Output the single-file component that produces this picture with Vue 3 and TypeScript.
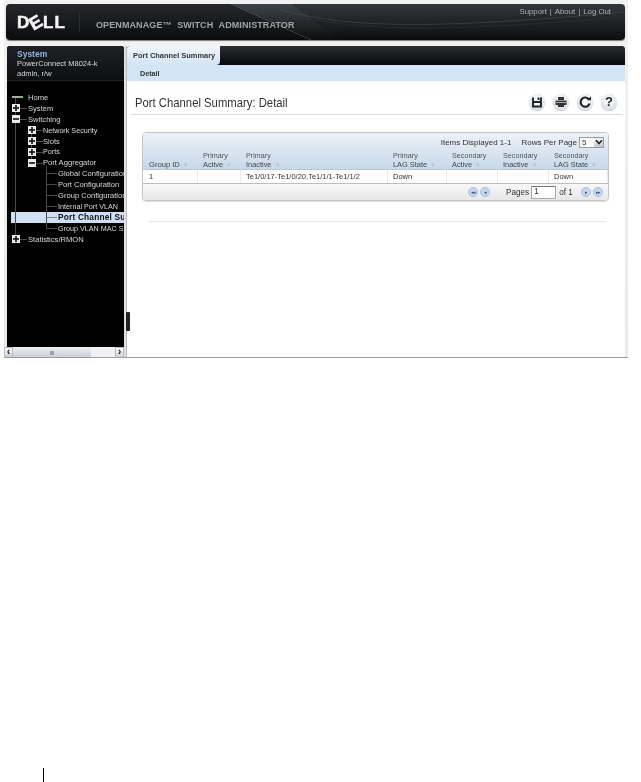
<script setup lang="ts">
interface TreeRow { label: string; depth: number; icon: 'plus' | 'minus' | 'leaf' | 'home'; size?: string; active?: boolean }
const tree: TreeRow[] = [
  { label: 'Home', depth: 0, icon: 'home' },
  { label: 'System', depth: 0, icon: 'plus' },
  { label: 'Switching', depth: 0, icon: 'minus' },
  { label: 'Network Security', depth: 1, icon: 'plus', size: 'sm' },
  { label: 'Slots', depth: 1, icon: 'plus' },
  { label: 'Ports', depth: 1, icon: 'plus', size: 'sm' },
  { label: 'Port Aggregator', depth: 1, icon: 'minus' },
  { label: 'Global Configuration', depth: 2, icon: 'leaf' },
  { label: 'Port Configuration', depth: 2, icon: 'leaf' },
  { label: 'Group Configuration', depth: 2, icon: 'leaf' },
  { label: 'Internal Port VLAN', depth: 2, icon: 'leaf', size: 'sm' },
  { label: 'Port Channel Summary', depth: 2, icon: 'leaf', active: true },
  { label: 'Group VLAN MAC Summary', depth: 2, icon: 'leaf', size: 'sm' },
  { label: 'Statistics/RMON', depth: 0, icon: 'plus' },
]
const columns = [
  { top: '', bottom: 'Group ID', w: 55 },
  { top: 'Primary', bottom: 'Active', w: 43 },
  { top: 'Primary', bottom: 'Inactive', w: 147 },
  { top: 'Primary', bottom: 'LAG State', w: 59 },
  { top: 'Secondary', bottom: 'Active', w: 51 },
  { top: 'Secondary', bottom: 'Inactive', w: 51 },
  { top: 'Secondary', bottom: 'LAG State', w: 59 },
]
const row = ['1', '', 'Te1/0/17-Te1/0/20,Te1/1/1-Te1/1/2', 'Down', '', '', 'Down']
</script>

<template>
  <div class="page">
    <div class="shot">
      <header class="masthead">
        <svg class="swoosh" viewBox="0 0 619 36" preserveAspectRatio="none" aria-hidden="true">
          <defs>
            <linearGradient id="mast" x1="0" y1="0" x2="0" y2="1">
              <stop offset="0" stop-color="#33363b" />
              <stop offset="0.6" stop-color="#1c1e21" />
              <stop offset="1" stop-color="#0b0c0d" />
            </linearGradient>
            <linearGradient id="band" x1="0" y1="0" x2="0" y2="1">
              <stop offset="0" stop-color="#25272b" />
              <stop offset="1" stop-color="#0b0c0e" />
            </linearGradient>
            <linearGradient id="wedge" x1="0" y1="0" x2="0" y2="1">
              <stop offset="0" stop-color="#3d434b" />
              <stop offset="1" stop-color="#1b1d20" stop-opacity="0" />
            </linearGradient>
          </defs>
          <path d="M0 0H225L305 36H0Z" fill="url(#band)" />
          <path d="M225 0H619V36H305Z" fill="url(#mast)" />
          <path d="M225 0H285L335 36H305Z" fill="url(#wedge)" />
          <path d="M272 5C340 24 420 26 619 8" fill="none" stroke="#4c5055" stroke-width="0.6" />
          <path d="M300 14C370 28 450 27 619 13" fill="none" stroke="#36393e" stroke-width="0.5" />
        </svg>
        <span class="logo">D<span class="logo-e">E</span>LL</span>
        <span class="logo-rule"></span>
        <span class="product">OPENMANAGE™ SWITCH ADMINISTRATOR</span>
        <nav class="links"><span>Support</span><i>|</i><span>About</span><i>|</i><span>Log Out</span></nav>
      </header>

      <div class="body">
        <aside class="side">
          <div class="sys">
            <div class="sys-name">System</div>
            <div>PowerConnect M8024-k</div>
            <div>admin, r/w</div>
          </div>
          <div class="tree">
            <span class="vline v0"></span>
            <span class="vline v1"></span>
            <span class="vline v2"></span>
            <div
              v-for="item in tree"
              :key="item.label"
              class="node"
              :class="[`d${item.depth}`, item.size, { active: item.active }]"
            >
              <span v-if="item.icon === 'home'" class="ico-home"></span>
              <span v-else-if="item.icon === 'leaf'" class="ico-leaf"></span>
              <span v-else class="ico-box">
                <svg viewBox="0 0 8 8" width="8" height="8" aria-hidden="true">
                  <path d="M1 4H7" stroke="#111" stroke-width="1.6" />
                  <path v-if="item.icon === 'plus'" d="M4 1V7" stroke="#111" stroke-width="1.6" />
                </svg>
              </span>
              <span class="node-label">{{ item.label }}</span>
            </div>
          </div>
          <div class="hscroll">
            <span class="arrow">‹</span>
            <span class="thumb"><b></b></span>
            <span class="rest"></span>
            <span class="arrow">›</span>
          </div>
        </aside>

        <div class="splitter"><span></span></div>

        <main class="main">
          <div class="tabbar"><div class="tab">Port Channel Summary</div></div>
          <div class="subbar">Detail</div>
          <div class="title-row">
            <h1>Port Channel Summary: Detail</h1>
            <div class="tools">
              <span class="tool">
                <svg viewBox="0 0 16 16" width="16" height="16" aria-hidden="true"><path d="M4 3.5V12.5H12V3.5M4.5 8H11.5M9.5 3.5V6" fill="none" stroke="#222" stroke-width="1.9" /></svg>
              </span>
              <span class="tool">
                <svg viewBox="0 0 16 16" width="16" height="16" aria-hidden="true"><path d="M5 3H11V6H5ZM2.5 6.5H13.5V11H2.5ZM5 10.5H11V13H5Z" fill="#333" /><path d="M3 8.5H13" stroke="#aaa" /></svg>
              </span>
              <span class="tool">
                <svg viewBox="0 0 16 16" width="16" height="16" aria-hidden="true"><path d="M12 5.5A4.6 4.6 0 1 0 12.6 9.5" fill="none" stroke="#222" stroke-width="2.2" /><path d="M9.8 6.2H14V2.4Z" fill="#222" /></svg>
              </span>
              <span class="tool q">?</span>
            </div>
          </div>

          <div class="grid-wrap">
            <section class="grid">
              <div class="grid-head">
                <div class="pager-top">
                  <span>Items Displayed 1-1</span>
                  <span class="rpp">Rows Per Page</span>
                  <span class="select"><em>5</em><b>
                    <svg viewBox="0 0 8 6" width="8" height="6" aria-hidden="true"><path d="M1 1.2L4 4.5L7 1.2" fill="none" stroke="#222" stroke-width="1.6" /></svg>
                  </b></span>
                </div>
                <div class="cols">
                  <div v-for="c in columns" :key="c.bottom + c.top" class="col" :style="{ width: c.w + 'px' }">
                    <div class="col-top">{{ c.top }}</div>
                    <div class="col-bottom" :class="{ lg: !c.top }">{{ c.bottom }} <span class="sort">▾</span></div>
                  </div>
                </div>
              </div>
              <div class="grid-row">
                <div
                  v-for="(cell, i) in row"
                  :key="i"
                  class="cell"
                  :style="{ width: columns[i].w + 'px' }"
                >{{ cell }}</div>
              </div>
              <div class="grid-foot">
                <span class="nav first"><span class="dot">◂◂</span><span class="dot">◂</span></span>
                <span class="pages">Pages</span>
                <span class="page-input">1</span>
                <span class="of">of 1</span>
                <span class="nav last"><span class="dot">▸</span><span class="dot">▸▸</span></span>
              </div>
            </section>
            <div class="grid-rule"></div>
          </div>
        </main>
      </div>
      <div class="edge"></div>
    </div>
    <div class="page-mark"></div>
  </div>
</template>

<style scoped>
.page {
  width: 641px;
  height: 782px;
  background: #fff;
  position: relative;
  overflow: hidden;
  font-family: "Liberation Sans", Arial, sans-serif;
  color: #333;
}
.shot {
  width: 624px;
  height: 358px;
  margin-left: 4px;
  padding: 4px 3px 0 2px;
  box-sizing: border-box;
  background: linear-gradient(#f2f2f2, #e9e9e9);
  display: flex;
  flex-direction: column;
  filter: blur(0.35px);
  position: relative;
}
.masthead {
  height: 36px;
  flex: none;
  border-radius: 4px;
  box-shadow: 0 1px 1px #777;
  position: relative;
  display: flex;
  align-items: center;
  overflow: hidden;
  color: #fff;
}
.swoosh {
  position: absolute;
  inset: 0;
  width: 100%;
  height: 100%;
}
.logo {
  position: relative;
  margin: 0 0 0 11px;
  font: 700 17px/1 "Liberation Sans", sans-serif;
  letter-spacing: 1.2px;
  color: #f4f4f4;
  -webkit-text-stroke: 0.5px #f4f4f4;
  width: 51px;
  white-space: nowrap;
}
.logo-e { display: inline-block; transform: rotate(-30deg) scale(1.05); }
.logo-rule {
  position: relative;
  width: 1px;
  height: 20px;
  margin-left: 11px;
  background: #2b2e31;
}
.product {
  position: relative;
  margin: 6px 0 0 16px;
  font: 700 9px/1 "Liberation Sans", sans-serif;
  letter-spacing: 0.1px;
  word-spacing: 3px;
  color: #a0a4a8;
}
.links {
  position: absolute;
  top: 3px;
  right: 14px;
  display: flex;
  gap: 3px;
  font-size: 7.8px;
  line-height: 10px;
  color: #aeb2b6;
}
.links i { font-style: normal; }
.body {
  flex: 1;
  min-height: 0;
  display: flex;
  margin-top: 6px;
}
.side {
  width: 117px;
  margin-left: 1px;
  flex: none;
  display: flex;
  flex-direction: column;
  background: #000;
  border-radius: 3px 3px 0 0;
  color: #d8d8d8;
}
.sys {
  height: 35px;
  box-sizing: border-box;
  padding: 3px 0 0 10px;
  border-bottom: 1px solid #222;
  background: linear-gradient(#1f2226, #0d0e10);
  font-size: 7.5px;
  line-height: 10px;
  border-radius: 3px 3px 0 0;
  white-space: nowrap;
}
.sys-name { color: #8db4e2; font-weight: 700; font-size: 8.5px; }
.tree {
  flex: 1;
  min-height: 0;
  overflow: hidden;
  padding-top: 11px;
  position: relative;
}
.vline {
  position: absolute;
  width: 1px;
  background: #4a4a4a;
  z-index: 1;
}
.v0 { left: 8px; top: 16px; height: 142px; }
.v1 { left: 24px; top: 48px; height: 33px; }
.v2 { left: 39px; top: 85px; height: 62px; }
.node {
  height: 10.9px;
  display: flex;
  align-items: center;
  white-space: nowrap;
  font-size: 7.6px;
  position: relative;
}
.node.sm .node-label { font-size: 7.2px; }
.d0 { padding-left: 5px; }
.d1 { padding-left: 21px; }
.d2 { padding-left: 39px; }
.ico-box {
  width: 8px;
  height: 8px;
  background: #e9e9e9;
  display: block;
  flex: none;
  position: relative;
  z-index: 2;
}
.ico-box svg { display: block; }
.ico-box::after {
  content: "";
  position: absolute;
  left: 100%;
  top: 4px;
  width: 7px;
  height: 1px;
  background: #4a4a4a;
}
.ico-home {
  width: 11px;
  height: 2px;
  background: linear-gradient(90deg, #aaa 70%, #7dc462 70%);
  flex: none;
  position: relative;
  z-index: 2;
}
.ico-leaf {
  width: 11px;
  height: 1px;
  background: #4a4a4a;
  flex: none;
}
.node-label { margin-left: 8px; }
.d0 .ico-home + .node-label { margin-left: 5px; }
.d1 .node-label { margin-left: 7px; }
.d2 .node-label { margin-left: 1px; }
.node.active {
  background: #cfe0f5;
  color: #111;
  height: 11px;
  margin-left: 4px;
  padding-left: 35px;
  overflow: hidden;
}
.node.active .ico-leaf { background: #7c8896; }
.node.active .node-label { font-size: 8.3px; font-weight: 700; letter-spacing: 0.2px; }
.hscroll {
  height: 11px;
  flex: none;
  display: flex;
  background: #f0f1f4;
  margin-left: -3px;
  color: #222;
}
.arrow {
  width: 9px;
  flex: none;
  background: linear-gradient(#fff, #c9ced6);
  border: 1px solid #b8bcc2;
  box-sizing: border-box;
  font: 700 11px/7px "Liberation Sans", sans-serif;
  text-align: center;
}
.thumb {
  width: 78px;
  flex: none;
  background: linear-gradient(#eef0f5, #c7ccd8);
  display: flex;
  align-items: center;
  justify-content: center;
}
.thumb b { width: 4px; height: 4px; background: #9aa0aa; }
.rest { flex: 1; }
.splitter {
  width: 3px;
  flex: none;
  position: relative;
  background: #dfdfdf;
  border-right: 1px solid #bdbdbd;
  box-sizing: border-box;
}
.splitter span {
  position: absolute;
  top: 266px;
  left: 2px;
  width: 4px;
  height: 19px;
  background: #222;
  border-radius: 1px;
  z-index: 1;
}
.main {
  flex: 1;
  min-width: 0;
  background: #fff;
  display: flex;
  flex-direction: column;
}
.tabbar {
  height: 19px;
  flex: none;
  background: linear-gradient(#2a2d31, #08090a);
  border-radius: 3px 3px 0 0;
  overflow: hidden;
}
.tab {
  width: 93px;
  height: 100%;
  background: linear-gradient(#f1f6fc, #d3e4f6);
  border-radius: 2px 0 0 0;
  border-bottom-right-radius: 4px;
  padding-left: 6px;
  box-sizing: border-box;
  font-size: 7.45px;
  font-weight: 700;
  line-height: 20px;
  color: #333;
  white-space: nowrap;
}
.subbar {
  height: 16px;
  flex: none;
  background: #d3e4f6;
  padding-left: 13px;
  box-sizing: border-box;
  font-size: 7.2px;
  font-weight: 700;
  line-height: 17px;
  color: #333;
}
.title-row {
  height: 34px;
  flex: none;
  display: flex;
  align-items: center;
  justify-content: space-between;
  margin: 0 2px 0 4px;
  border-bottom: 1px solid #dcdcdc;
  box-sizing: border-box;
  padding: 0 6px 0 4px;
}
h1 {
  margin: 10px 0 0;
  font-size: 12.2px;
  font-weight: 400;
  color: #333;
  line-height: 16px;
  white-space: nowrap;
  transform: scaleX(0.927);
  transform-origin: left center;
}
.tools {
  display: flex;
  gap: 8px;
  margin-top: 8px;
}
.tool {
  width: 16px;
  height: 16px;
  border-radius: 50%;
  background: radial-gradient(circle at 50% 40%, #f4f6f9 30%, #c5cfda);
  box-shadow: 0 1px 1px #c4c4c4;
  display: block;
}
.tool svg { display: block; }
.tool.q {
  text-align: center;
  font: 700 13px/16px "Liberation Sans", sans-serif;
  color: #222;
}
.grid-wrap {
  padding: 17px 16px 0 15px;
}
.grid {
  width: 467px;
  height: 69px;
  border: 1px solid #c6c6c6;
  border-radius: 4px;
  box-sizing: border-box;
  box-shadow: 0 1px 1px #ddd;
  overflow: hidden;
  display: flex;
  flex-direction: column;
}
.grid-head {
  height: 37px;
  flex: none;
  background: linear-gradient(#edf2f8, #c7d8ea);
  border-bottom: 1px solid #b7c7d8;
  box-sizing: border-box;
}
.pager-top {
  height: 16px;
  display: flex;
  align-items: center;
  justify-content: flex-end;
  padding: 1px 4px 0 0;
  font-size: 8px;
  color: #333;
}
.rpp { margin-left: 10px; }
.select {
  width: 25px;
  height: 11px;
  margin-left: 2px;
  background: #fff;
  border: 1px solid #999;
  box-sizing: border-box;
  display: flex;
  align-items: center;
  justify-content: space-between;
  font-size: 8px;
  padding-left: 2px;
}
.select em { font-style: normal; }
.select b {
  width: 9px;
  height: 9px;
  background: linear-gradient(#f4f4f4, #c4c8ce);
  display: flex;
  align-items: center;
  justify-content: center;
}
.select svg { display: block; }
.cols { display: flex; padding-top: 1px; }
.col {
  box-sizing: border-box;
  padding-left: 5px;
  flex: none;
  height: 19px;
}
.col:first-child { padding-left: 6px; }
.col-top { font-size: 7.2px; line-height: 9px; height: 9px; color: #555; }
.col-bottom { font-size: 7.4px; line-height: 10px; color: #444; white-space: nowrap; }
.col-bottom.lg { font-size: 7.6px; }
.sort { color: #b9c5d2; font-size: 7px; margin-left: 2px; }
.grid-row {
  height: 14px;
  flex: none;
  display: flex;
  background: #fff;
  border-bottom: 1px solid #bdbdbd;
  box-sizing: border-box;
}
.cell {
  flex: none;
  box-sizing: border-box;
  padding-left: 5px;
  font-size: 7.5px;
  line-height: 13px;
  color: #333;
  border-right: 1px solid #eaeaea;
  white-space: nowrap;
}
.cell:first-child { padding-left: 6px; }
.grid-foot {
  flex: 1;
  display: flex;
  align-items: center;
  background: linear-gradient(#f8f8f8, #e7e7e7);
  font-size: 8.2px;
  color: #333;
  padding-left: 325px;
}
.nav { display: flex; gap: 2px; }
.dot {
  width: 10px;
  height: 10px;
  border-radius: 50%;
  background: #c4d7f0;
  border: 1px solid #a9bfdc;
  box-sizing: border-box;
  font-size: 5px;
  line-height: 8px;
  letter-spacing: -1.4px;
  text-align: center;
  color: #34548a;
}
.pages { margin-left: 16px; }
.page-input {
  width: 25px;
  height: 13px;
  margin-left: 2px;
  border: 1px solid #aaa;
  border-top-color: #777;
  background: #fff;
  box-sizing: border-box;
  padding-left: 2px;
  line-height: 10px;
}
.of { margin-left: 3px; }
.nav.last { margin-left: 8px; }
.grid-rule {
  margin: 20px 0 0 6px;
  width: 458px;
  height: 1px;
  background: #e8e8e8;
}
.edge {
  position: absolute;
  left: 0;
  right: 0;
  top: 357px;
  height: 1px;
  background: #9d9d9d;
}
.page-mark {
  position: absolute;
  left: 43px;
  top: 768px;
  width: 1px;
  height: 14px;
  background: #000;
}
</style>
